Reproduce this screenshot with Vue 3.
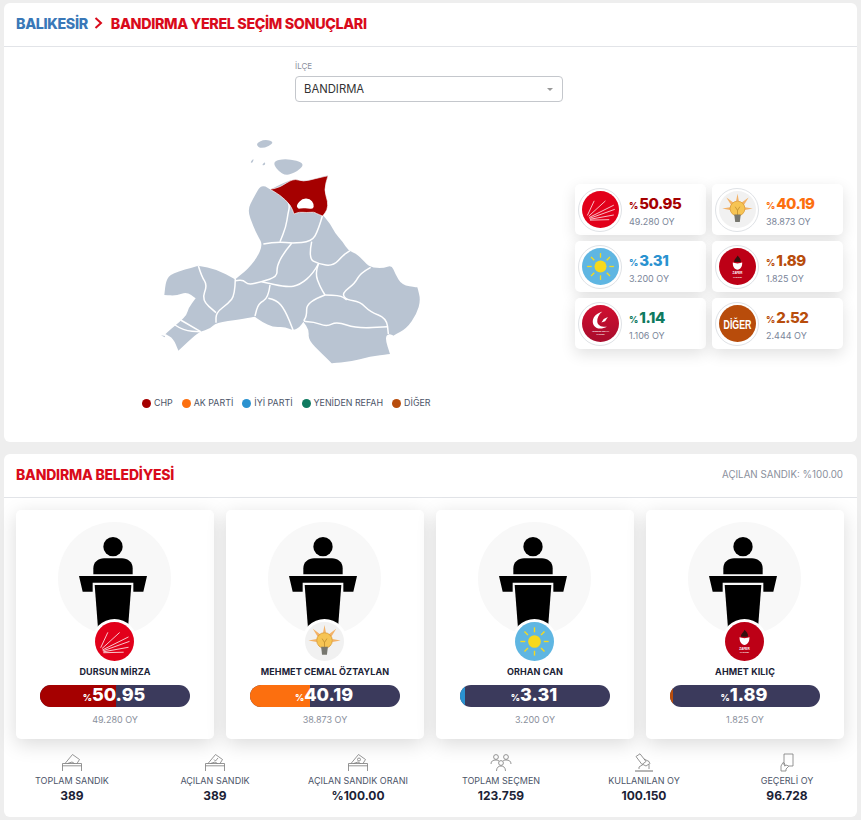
<script setup>
function smooth(p, closed = true) {
  const mid = (a, b) => [(a[0] + b[0]) / 2, (a[1] + b[1]) / 2]
  if (closed) {
    const s = mid(p[p.length - 1], p[0])
    let d = `M${s[0]} ${s[1]}`
    p.forEach((c, i) => {
      const m = mid(c, p[(i + 1) % p.length])
      d += `Q${c[0]} ${c[1]} ${m[0]} ${m[1]}`
    })
    return d + 'Z'
  }
  let d = `M${p[0][0]} ${p[0][1]}`
  for (let i = 1; i < p.length - 1; i++) {
    const m = mid(p[i], p[i + 1])
    d += `Q${p[i][0]} ${p[i][1]} ${m[0]} ${m[1]}`
  }
  const l = p[p.length - 1]
  return d + `L${l[0]} ${l[1]}`
}
const land = smooth([[385,178],[392,170],[405,168],[420,178],[422,178],[490,145],[520,155],[594,136],[594,136],[582,180],[592,215],[590,240],[578,255],[578,255],[600,280],[615,310],[638,335],[655,362],[680,372],[700,392],[720,412],[760,415],[785,405],[795,430],[815,465],[862,472],[862,472],[872,510],[860,552],[830,595],[790,617],[790,617],[775,610],[765,625],[780,672],[780,672],[720,680],[660,695],[605,700],[605,700],[575,670],[535,630],[537,600],[520,575],[520,575],[510,590],[490,602],[465,590],[430,592],[395,575],[375,560],[375,560],[330,568],[258,578],[240,597],[210,605],[190,620],[145,662],[145,662],[130,625],[106,612],[106,612],[125,595],[150,575],[170,555],[175,535],[197,505],[197,505],[170,485],[140,497],[103,495],[103,495],[108,450],[125,430],[205,407],[205,407],[260,418],[315,448],[315,448],[335,432],[350,420],[380,385],[398,345],[385,320],[370,290],[352,240],[370,205]])
const islands = [
  [[375,42],[405,27],[436,38],[395,58]],
  [[423,95],[470,85],[528,100],[495,130],[458,137]],
  [[360,97],[372,84],[368,99]],
  [[395,106],[405,95],[406,106]]
].map(p => smooth(p))
const red = smooth([[420,178],[420,178],[450,172],[490,145],[520,155],[555,146],[594,137],[594,137],[582,180],[594,215],[592,240],[578,258],[578,258],[558,250],[552,246],[530,248],[508,246],[492,252],[492,252],[482,225],[450,195]])
const lake = smooth([[499,225],[517,205],[540,206],[552,222],[550,238],[530,234],[510,236],[503,236]])
const borders = [
  [[470,205],[480,225],[474,250],[468,290],[450,335]],
  [[578,255],[565,300],[545,335],[485,340],[450,335],[400,342]],
  [[485,340],[460,370],[440,410],[442,440],[395,455],[355,465],[340,450],[316,452]],
  [[545,335],[535,385],[565,402],[610,408],[640,375],[660,362]],
  [[565,402],[550,430],[510,465],[470,472],[395,455]],
  [[420,465],[415,505],[385,520],[375,558]],
  [[415,505],[440,510],[465,540],[490,602]],
  [[565,402],[555,430],[570,470],[585,495]],
  [[722,412],[690,430],[675,460],[635,490],[650,510],[690,515],[720,545],[770,565],[775,612]],
  [[585,495],[630,495],[650,510]],
  [[585,495],[530,515],[530,560],[518,575],[550,575],[590,590],[620,575],[680,595],[772,590]],
  [[316,445],[315,495],[295,520],[258,548],[258,578]],
  [[205,407],[215,440],[232,465],[215,510],[258,548]],
  [[152,570],[212,605]],
  [[135,585],[160,602],[212,605]]
].map(p => smooth(p, false))

const sunRays = [0, 45, 90, 135, 180, 225, 270, 315]
  .map(r => `<path d="M20 5.500V10.500" transform="rotate(${r} 20 20)"/>`)
  .join('')
const sans = 'font-family="Liberation Sans, sans-serif" font-weight="700" text-anchor="middle" fill="#fff"'
const logos = {
  chp: `<circle cx="20" cy="20" r="20" fill="#e2001a"/><g stroke="#fff" stroke-width=".8" stroke-linecap="round" fill="none"><path d="M6 26 13 11"/><path d="M7.500 27 25 11"/><path d="M8 28.500 34 15.500"/><path d="M8.500 29.500 35 20"/><path d="M9 30.500 34 26"/><path d="M9 31.500 29 31"/></g>`,
  akp: `<circle cx="20" cy="20" r="20" fill="#f1f1f1"/><g fill="#f3b267"><path d="M20 3 21.500 11H18.500Z"/><path d="M8 7 15.500 12.500 13 15Z"/><path d="M32 7 24.500 12.500 27 15Z"/><path d="M3.500 19 12 17.500V20.500Z"/><path d="M36.500 19 28 17.500V20.500Z"/></g><circle cx="20" cy="19" r="8" fill="#f6c453" stroke="#d9942b" stroke-width=".8"/><path d="M16.500 25.500H23.500L22.500 33.500H17.500Z" fill="#77776f"/><path d="M17.500 17 20 21 22.500 17M20 21V26" stroke="#a9781f" stroke-width=".6" fill="none"/>`,
  iyi: `<circle cx="20" cy="20" r="20" fill="#5fb6e2"/><circle cx="20" cy="20" r="6.500" fill="#f6d91c"/><g stroke="#f6d91c" stroke-width="1.400">${sunRays}</g>`,
  zafer: `<circle cx="20" cy="20" r="20" fill="#bd0016"/><path d="M20 8C22 10 24 12 23.500 15L16.500 15C16 12 19 11 20 8Z" fill="#33110f"/><path d="M15 15.500C17 17 23 17 25 15.500C25.500 20 23 23.500 20 23.500C17 23.500 14.500 20 15 15.500Z" fill="#fff"/><text x="20" y="28.500" font-size="3.200" ${sans}>ZAFER</text><text x="20" y="32" font-size="2.400" ${sans}>PARTİSİ</text>`,
  yrp: `<defs><linearGradient id="yrpg" x1="0" y1="0" x2="0" y2="1"><stop offset="0" stop-color="#d00f30"/><stop offset="1" stop-color="#a80c2c"/></linearGradient></defs><circle cx="20" cy="20" r="20" fill="url(#yrpg)"/><path d="M22 7C13 10 10 16 12.500 21.500C15 26 21 26.500 27 23.500C21 24 17 22 16.500 18C16.200 14.500 18 10 22 7Z" fill="#fff"/><path d="M28 13 23.500 15 21 19 25 17.500Z" fill="#fff"/><text x="20" y="29.500" font-size="2.300" ${sans}>YENİDEN REFAH</text><text x="20" y="32.500" font-size="2.300" ${sans}>PARTİSİ</text>`,
  diger: `<circle cx="20" cy="20" r="20" fill="#b84c0b"/><text transform="translate(20 26) scale(.66 1)" font-size="14.500" ${sans}>DİĞER</text>`
}

const summary = [
  { logo: 'chp', pct: '50.95', votes: '49.280', color: '#a50000' },
  { logo: 'akp', pct: '40.19', votes: '38.873', color: '#fc6f0f' },
  { logo: 'iyi', pct: '3.31', votes: '3.200', color: '#2a92d0' },
  { logo: 'zafer', pct: '1.89', votes: '1.825', color: '#b84d0c' },
  { logo: 'yrp', pct: '1.14', votes: '1.106', color: '#0f7a60' },
  { logo: 'diger', pct: '2.52', votes: '2.444', color: '#b84d0c' }
]
const legend = [
  { name: 'CHP', color: '#a50000' },
  { name: 'AK PARTİ', color: '#fc6f0f' },
  { name: 'İYİ PARTİ', color: '#2a92d0' },
  { name: 'YENİDEN REFAH', color: '#0f7a60' },
  { name: 'DİĞER', color: '#b84d0c' }
]
const candidates = [
  { logo: 'chp', name: 'DURSUN MİRZA', pct: '50.95', width: 50.95, votes: '49.280', color: '#a50000' },
  { logo: 'akp', name: 'MEHMET CEMAL ÖZTAYLAN', pct: '40.19', width: 40.19, votes: '38.873', color: '#fc6f0f' },
  { logo: 'iyi', name: 'ORHAN CAN', pct: '3.31', width: 3.31, votes: '3.200', color: '#2a92d0' },
  { logo: 'zafer', name: 'AHMET KILIÇ', pct: '1.89', width: 1.89, votes: '1.825', color: '#b84d0c' }
]
const stats = [
  { icon: 'box', label: 'TOPLAM SANDIK', value: '389' },
  { icon: 'boxcheck', label: 'AÇILAN SANDIK', value: '389' },
  { icon: 'boxpct', label: 'AÇILAN SANDIK ORANI', value: '%100.00' },
  { icon: 'people', label: 'TOPLAM SEÇMEN', value: '123.759' },
  { icon: 'vote', label: 'KULLANILAN OY', value: '100.150' },
  { icon: 'valid', label: 'GEÇERLİ OY', value: '96.728' }
]
</script>

<template>
  <div class="page">
    <section class="panel top">
      <header class="head">
        <h1 class="crumb">
          <span class="city">BALIKESİR</span>
          <svg class="chev" width="9" height="12" viewBox="0 0 9 12"><path d="M1.500 1 7 6 1.500 11" fill="none" stroke="#d90b1b" stroke-width="2" /></svg>
          <span class="title">BANDIRMA YEREL SEÇİM SONUÇLARI</span>
        </h1>
      </header>
      <div class="pick">
        <label class="pick-label">İLÇE</label>
        <div class="select">
          <span>BANDIRMA</span>
          <i class="caret"></i>
        </div>
      </div>
      <div class="body">
        <div class="map-col">
          <svg class="map" width="300" height="260" viewBox="0 0 900 780">
            <g fill="#b9c4d2">
              <path :d="land" />
              <path v-for="(d, i) in islands" :key="i" :d="d" />
              <path d="M93 616 105 618 104 622Z" />
            </g>
            <g fill="none" stroke="#fff" stroke-width="4.500" stroke-linejoin="round">
              <path v-for="(d, i) in borders" :key="i" :d="d" />
            </g>
            <path :d="red" fill="#a50000" stroke="#fff" stroke-width="2" />
            <path :d="lake" fill="#fff" />
          </svg>
          <ul class="legend">
            <li v-for="l in legend" :key="l.name">
              <i :style="{ background: l.color }"></i>{{ l.name }}
            </li>
          </ul>
        </div>
        <div class="summary">
          <div v-for="s in summary" :key="s.logo" class="sum-card">
            <span class="ring"><svg width="37" height="37" viewBox="0 0 40 40" v-html="logos[s.logo]"></svg></span>
            <div class="sum-text">
              <div class="sum-pct" :style="{ color: s.color }"><small>%</small>{{ s.pct }}</div>
              <div class="sum-votes">{{ s.votes }} OY</div>
            </div>
          </div>
        </div>
      </div>
    </section>

    <section class="panel bottom">
      <header class="head head2">
        <h2 class="title big">BANDIRMA BELEDİYESİ</h2>
        <span class="opened">AÇILAN SANDIK: %100.00</span>
      </header>
      <div class="cards">
        <article v-for="c in candidates" :key="c.name" class="card">
          <div class="portrait">
            <svg width="113" height="113" viewBox="174 216 339 339">
              <circle cx="339" cy="290" r="29" />
              <path d="M280 373V355C280 336 295 325 312 325H366C383 325 398 336 398 355V373Z" />
              <path d="M237 378H441L430 425H400V398H278V425H248Z" />
              <path d="M284 405H394L384 535H294Z" />
            </svg>
          </div>
          <span class="badge"><svg width="39" height="39" viewBox="0 0 40 40" v-html="logos[c.logo]"></svg></span>
          <div class="name">{{ c.name }}</div>
          <div class="bar">
            <span class="fill" :style="{ width: c.width + '%', background: c.color }"></span>
            <span class="bar-text"><small>%</small>{{ c.pct }}</span>
          </div>
          <div class="votes">{{ c.votes }} OY</div>
        </article>
      </div>
      <div class="stats">
        <div v-for="s in stats" :key="s.label" class="stat">
          <svg class="ico" width="24" height="19" viewBox="0 0 24 19" fill="none" stroke="#7b7b7b" stroke-width=".8">
            <g v-if="s.icon.startsWith('box')">
              <path d="M2.500 18V10.500H21.500V18M2.500 12.800H21.500" />
              <path d="M5 10.500 12.500 1.500 19.500 6.500 17 10.500" />
              <path d="M7.500 10.500 12 9 14.500 10.500" />
              <path v-if="s.icon === 'boxcheck'" d="M11 6.500 12.500 8 15 5" />
              <circle v-if="s.icon === 'boxpct'" cx="13" cy="6.500" r="1.500" />
            </g>
            <g v-else-if="s.icon === 'people'">
              <circle cx="7" cy="4" r="2.400" /><circle cx="17" cy="4" r="2.400" /><circle cx="12" cy="10" r="2.400" />
              <path d="M2 11C2 8 4 7 7 7 8.500 7 9.500 7.500 10 8M22 11C22 8 20 7 17 7 15.500 7 14.500 7.500 14 8" />
              <path d="M7.500 18C7.500 14.500 9.500 13 12 13 14.500 13 16.500 14.500 16.500 18" />
            </g>
            <g v-else-if="s.icon === 'vote'">
              <path d="M3 18H21" stroke-width="1.100" />
              <path d="M7 16V14L11 11.500 14 13 17 11V16" />
              <path d="M4 3.500 8 .8 14 8.500 10 11.500Z" />
              <path d="M12 6 17 8.500 18 11" />
            </g>
            <g v-else>
              <path d="M9 12V1H18V13H13" />
              <path d="M6 18V13L8 9.500 10 11 9.500 13 12 12 13.500 13.500 11 16V18Z" />
            </g>
          </svg>
          <div class="stat-label">{{ s.label }}</div>
          <div class="stat-value">{{ s.value }}</div>
        </div>
      </div>
    </section>
  </div>
</template>

<style scoped>
.page {
  display: flex;
  flex-direction: column;
  gap: 12px;
  padding: 3px 4px;
  box-sizing: border-box;
  font-family: Inter, "Open Sans", sans-serif;
  color: #1b2236;
}
.panel { background: #fff; border-radius: 6px; }
.top { height: 439px; }
.bottom { height: 363px; }
.head {
  height: 44px;
  box-sizing: border-box;
  border-bottom: 1px solid #e2e4e8;
  padding: 0 12px 3px;
  display: flex;
  align-items: center;
}
.crumb { margin: 0; display: flex; align-items: center; font-size: 14.300px; font-weight: 800; letter-spacing: -.35px; }
.city { color: #3a78b8; }
.chev { margin: 0 8px 0 6px; }
.title { color: #d90b1b; }
.pick { width: 268px; margin: 14px 0 0 291px; }
.pick-label { display: block; font-size: 8px; color: #8a8f9c; line-height: 10px; margin-bottom: 5px; }
.select {
  height: 26px;
  box-sizing: border-box;
  border: 1px solid #c4c7cc;
  border-radius: 4px;
  padding: 0 8px;
  display: flex;
  align-items: center;
  justify-content: space-between;
  font-size: 11.300px;
  color: #333;
}
.caret { border: 3px solid transparent; border-top-color: #999; border-bottom: 0; margin-right: 1px; }
.body { display: flex; justify-content: space-between; padding: 28px 14px 0 126px; }
.map { display: block; }
.legend {
  list-style: none;
  margin: 8px 0 0 12px;
  padding: 0;
  display: flex;
  gap: 9px;
  font-size: 8.900px;
  line-height: 10px;
  color: #4b5468;
  white-space: nowrap;
}
.legend li { display: flex; align-items: center; }
.legend i { width: 9px; height: 9px; border-radius: 50%; margin-right: 3px; }
.summary {
  margin-top: 54px;
  display: grid;
  grid-template-columns: 131px 131px;
  grid-auto-rows: 51px;
  gap: 6px;
  align-self: flex-start;
}
.sum-card {
  background: #fff;
  border-radius: 5px;
  box-shadow: 0 5px 15px rgba(0,0,0,.12);
  display: flex;
  align-items: center;
  padding-left: 3px;
  gap: 7px;
}
.ring {
  width: 44px;
  height: 44px;
  box-sizing: border-box;
  border: 1px solid #dfe2e6;
  border-radius: 50%;
  display: flex;
  align-items: center;
  justify-content: center;
  flex: none;
}
.sum-pct { font-size: 15px; font-weight: 800; line-height: 19px; letter-spacing: -.5px; margin-top: 3px; }
.sum-pct small { font-size: 9px; font-weight: 800; margin-right: 1px; letter-spacing: 0; }
.sum-votes { font-size: 9px; line-height: 13px; color: #7a8599; margin-top: 0; }
.head2 { justify-content: space-between; padding: 0 14px 3px 12px; }
.big { margin: 0; font-size: 14px; font-weight: 800; letter-spacing: -.2px; }
.opened { font-size: 9.750px; color: #8a8f9c; }
.cards { display: flex; gap: 12px; padding: 12px 12px 0; }
.card {
  width: 198px;
  height: 229px;
  box-sizing: border-box;
  border-radius: 5px;
  background: #fff;
  box-shadow: 0 5px 20px rgba(0,0,0,.15);
  padding-top: 12px;
  display: flex;
  flex-direction: column;
  align-items: center;
}
.portrait { width: 113px; height: 113px; border-radius: 50%; background: #f8f8f8; overflow: hidden; margin-right: 2px; }
.portrait svg { display: block; }
.badge {
  position: relative;
  margin: -16px 2px 0 0;
  width: 45px;
  height: 45px;
  box-sizing: border-box;
  border-radius: 50%;
  background: #fff;
  display: flex;
  align-items: center;
  justify-content: center;
  flex: none;
}
.name { margin-top: 1px; font-size: 9px; font-weight: 700; line-height: 13px; letter-spacing: .1px; color: #1b2236; white-space: nowrap; }
.bar {
  position: relative;
  margin-top: 7px;
  width: 150px;
  height: 22px;
  border-radius: 11px;
  background: #3b3a5c;
  overflow: hidden;
  display: flex;
  align-items: center;
  justify-content: center;
  flex: none;
}
.fill { position: absolute; left: 0; top: 0; bottom: 0; }
.bar-text { position: relative; color: #fff; font-size: 18px; font-weight: 800; line-height: 22px; margin-right: 2px; }
.bar-text small { font-size: 9px; font-weight: 800; }
.votes { margin-top: 7px; font-size: 9px; line-height: 12px; color: #8a8f9c; }
.stats {
  display: grid;
  grid-template-columns: repeat(6, 143px);
  margin: 14px -3.500px 0;
}
.stat { display: flex; flex-direction: column; align-items: center; }
.ico { display: block; }
.stat-label { margin-top: 3px; font-size: 9px; line-height: 12px; color: #4b5468; white-space: nowrap; }
.stat-value { margin-top: 1px; font-size: 12px; font-weight: 700; line-height: 15px; color: #1b2236; }
</style>

<style>
html, body { background: #eee; margin: 0; }
</style>
